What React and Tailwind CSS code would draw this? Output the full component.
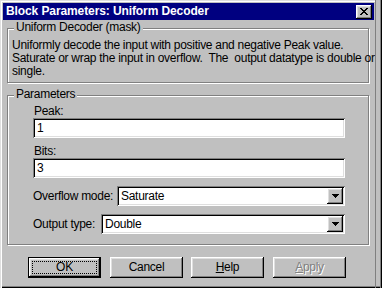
import React from "react";

const raised =
  "shadow-[inset_-1px_-1px_0_#000000,inset_1px_1px_0_#ffffff,inset_-2px_-2px_0_#808080,inset_2px_2px_0_#dfdfdf]";
const sunken =
  "shadow-[inset_1px_1px_0_#808080,inset_-1px_-1px_0_#ffffff,inset_2px_2px_0_#000000,inset_-2px_-2px_0_#dfdfdf]";
const groove = "border border-[#808080] shadow-[inset_1px_1px_0_#ffffff,1px_1px_0_#ffffff]";

function CloseGlyph() {
  const rows = ["11000011", "01100110", "00111100", "00011000", "00111100", "01100110", "11000011"];
  return (
    <svg width="8" height="7" viewBox="0 0 8 7" shapeRendering="crispEdges">
      {rows.map((r, y) =>
        r.split("").map((c, x) => (c === "1" ? <rect key={x + "-" + y} x={x} y={y} width="1" height="1" fill="#000" /> : null))
      )}
    </svg>
  );
}

function Arrow() {
  return (
    <svg width="7" height="4" viewBox="0 0 7 4" shapeRendering="crispEdges">
      <rect x="0" y="0" width="7" height="1" fill="#000" />
      <rect x="1" y="1" width="5" height="1" fill="#000" />
      <rect x="2" y="2" width="3" height="1" fill="#000" />
      <rect x="3" y="3" width="1" height="1" fill="#000" />
    </svg>
  );
}

function Combo({ value, w }) {
  return (
    <div className={`${w} h-[20px] bg-white ${sunken} flex items-center pl-[4px] pr-[2px]`}>
      <span className="flex-1">{value}</span>
      <div className={`w-[16px] h-[16px] bg-[#c0c0c0] ${raised} flex items-center justify-center`}>
        <Arrow />
      </div>
    </div>
  );
}

function Btn({ children, className = "" }) {
  return (
    <div className={`w-[73px] h-[21px] bg-[#c0c0c0] ${raised} flex items-center justify-center ${className}`}>
      {children}
    </div>
  );
}

export default function App() {
  return (
    <div className="w-[382px] h-[288px] bg-[#c0c0c0] flex font-['Liberation_Sans',Arial,sans-serif] text-[12px] leading-[13px] tracking-[-0.28px] text-black overflow-hidden shadow-[inset_0_-1px_0_#000000,inset_0_-2px_0_#808080]">
      <div className="w-[375px] h-full flex flex-col pt-[3px] pl-[3px] shadow-[inset_1px_1px_0_#dfdfdf,inset_2px_2px_0_#ffffff]">
        <div className="w-[371px] h-[17px] bg-[#000080] flex items-center pl-[3px] pr-[2px]">
          <span className="text-white font-bold flex-1 tracking-[-0.1px]">Block Parameters: Uniform Decoder</span>
          <div className={`w-[16px] h-[14px] bg-[#c0c0c0] ${raised} flex items-center justify-center`}>
            <CloseGlyph />
          </div>
        </div>

        <div className={`ml-[4px] mt-[8px] w-[362px] h-[55px] ${groove} flex flex-col`}>
          <span className="self-start -mt-[8px] ml-[6px] px-[2px] bg-[#c0c0c0]">Uniform Decoder (mask)</span>
          <div className="mt-[5px] pl-[4px] whitespace-pre">
            <div>Uniformly decode the input with positive and negative Peak value.</div>
            <div>Saturate or wrap the input in overflow.  The  output datatype is double or</div>
            <div>single.</div>
          </div>
        </div>

        <div className={`ml-[4px] mt-[12px] w-[362px] h-[150px] ${groove} flex flex-col`}>
          <span className="self-start -mt-[8px] ml-[6px] px-[2px] bg-[#c0c0c0]">Parameters</span>
          <div className="mt-[4px] ml-[26px]">Peak:</div>
          <div className={`ml-[25px] w-[312px] h-[20px] bg-white ${sunken} flex items-center pl-[4px]`}>1</div>
          <div className="mt-[7px] ml-[26px]">Bits:</div>
          <div className={`ml-[25px] w-[312px] h-[20px] bg-white ${sunken} flex items-center pl-[4px]`}>3</div>
          <div className="mt-[8px] ml-[25px] w-[312px] flex items-center justify-between">
            <span>Overflow mode:</span>
            <Combo value="Saturate" w="w-[228px]" />
          </div>
          <div className="mt-[8px] ml-[25px] w-[312px] flex items-center justify-between">
            <span>Output type:</span>
            <Combo value="Double" w="w-[244px]" />
          </div>
        </div>

        <div className="mt-[12px] flex">
          <div className="ml-[25px] border border-black">
            <div className={`w-[71px] h-[19px] bg-[#c0c0c0] ${raised} flex items-center justify-center p-[3px]`}>
              <div className="w-full h-full border border-dotted border-black flex items-center justify-center">OK</div>
            </div>
          </div>
          <Btn className="ml-[9px]">Cancel</Btn>
          <Btn className="ml-[8px]">
            <span><span className="underline">H</span>elp</span>
          </Btn>
          <Btn className="ml-[9px]">
            <span className="text-[#808080] [text-shadow:1px_1px_0_#ffffff]"><span className="underline">A</span>pply</span>
          </Btn>
        </div>
      </div>
      <div className="w-[7px] h-full border-l border-[#808080] border-r border-r-black shadow-[inset_-1px_0_0_#808080]" />
    </div>
  );
}
